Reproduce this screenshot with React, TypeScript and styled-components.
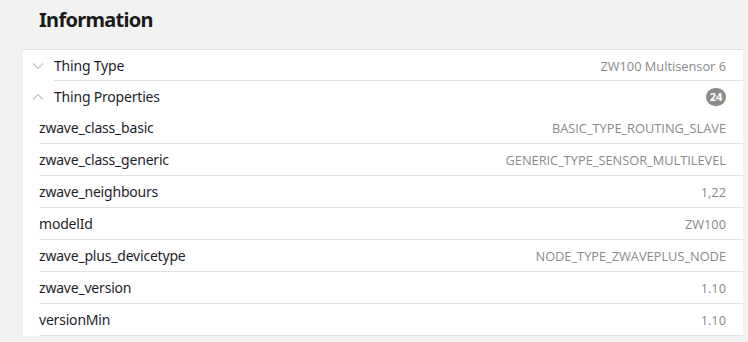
import React from 'react';
import styled, { createGlobalStyle } from 'styled-components';

const GlobalStyle = createGlobalStyle`
	html, body {
		margin: 0;
		padding: 0;
		background: #f2f2f2;
	}
	body {
		font-family: "Noto Sans", "Open Sans", sans-serif;
		color: #222;
	}
`;

const properties: [string, string][] = [
	['zwave_class_basic', 'BASIC_TYPE_ROUTING_SLAVE'],
	['zwave_class_generic', 'GENERIC_TYPE_SENSOR_MULTILEVEL'],
	['zwave_neighbours', '1,22'],
	['modelId', 'ZW100'],
	['zwave_plus_devicetype', 'NODE_TYPE_ZWAVEPLUS_NODE'],
	['zwave_version', '1.10'],
	['versionMin', '1.10'],
];

const Chevron = ({ up }: { up?: boolean }) => (
	<svg width="12" height="8" viewBox="0 0 12 8">
		<path
			d={up ? 'M1 6.5 L6 1.5 L11 6.5' : 'M1 1.5 L6 6.5 L11 1.5'}
			fill="none"
			stroke="#c4c4c4"
			strokeWidth="1.2"
		/>
	</svg>
);

const App = () => {
	return (
		<Page>
			<GlobalStyle />
			<Title>Information</Title>
			<Panel>
				<GroupRow $divider>
					<ChevronSlot><Chevron /></ChevronSlot>
					<Label>Thing Type</Label>
					<Value>ZW100 Multisensor 6</Value>
				</GroupRow>
				<GroupRow>
					<ChevronSlot><Chevron up /></ChevronSlot>
					<Label>Thing Properties</Label>
					<Badge>24</Badge>
				</GroupRow>
				{properties.map(([name, value]) => (
					<PropRow key={name}>
						<Label>{name}</Label>
						<Value>{value}</Value>
					</PropRow>
				))}
			</Panel>
		</Page>
	);
};

const Page = styled.div`
	width: 748px;
	height: 342px;
	overflow: hidden;
	padding-right: 5px;
	box-sizing: border-box;
`;

const Title = styled.h2`
	margin: 0;
	height: 49px;
	box-sizing: border-box;
	padding: 6px 0 0 39px;
	font-size: 20px;
	font-weight: 700;
	color: #1a1a1a;
	letter-spacing: -0.7px;
`;

const Panel = styled.div`
	margin-left: 23px;
	background: #fff;
	border-top: 1px solid #e2e2e2;
`;

const GroupRow = styled.div<{ $divider?: boolean }>`
	display: flex;
	align-items: center;
	height: 31px;
	padding-right: 17px;
	position: relative;

	${(p) => p.$divider && `
		&::after {
			content: '';
			position: absolute;
			left: 31px;
			right: 0;
			bottom: 0;
			height: 1px;
			background: #e2e2e2;
		}
	`}
`;

const ChevronSlot = styled.div`
	width: 31px;
	padding-left: 9px;
	box-sizing: border-box;
	display: flex;
	align-items: center;
`;

const PropRow = styled.div`
	display: flex;
	align-items: center;
	height: 31px;
	margin-left: 16px;
	padding-right: 17px;
	border-bottom: 1px solid #e2e2e2;
`;

const Label = styled.span`
	font-size: 14px;
	color: #1e1e2a;
	flex: 1;
	white-space: nowrap;
	letter-spacing: -0.2px;
`;

const Value = styled.span`
	font-family: "Open Sans", sans-serif;
	font-size: 12.8px;
	color: #8a8a8a;
	white-space: nowrap;
`;

const Badge = styled.span`
	min-width: 20px;
	height: 18px;
	border-radius: 9px;
	background: #8c8c8c;
	color: #fff;
	font-family: "Open Sans", sans-serif;
	font-size: 11px;
	font-weight: 700;
	display: flex;
	align-items: center;
	justify-content: center;
	padding: 0 3px;
	box-sizing: border-box;
`;

export default App;
